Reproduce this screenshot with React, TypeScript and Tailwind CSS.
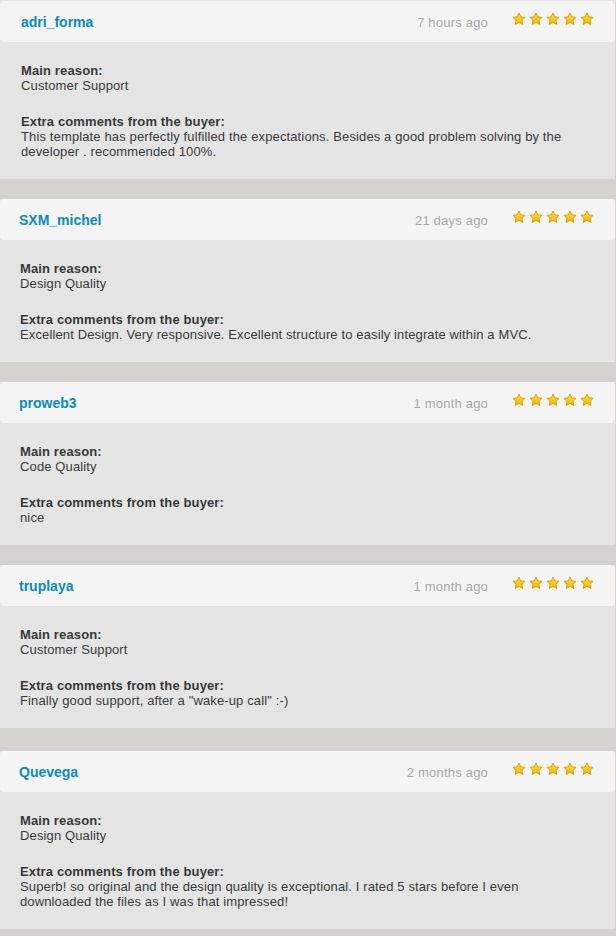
import React from "react";

type Review = {
  user: string;
  date: string;
  reason: string;
  comment: string;
  first?: boolean;
  gap: string;
};

const reviews: Review[] = [
  {
    user: "adri_forma",
    date: "7 hours ago",
    reason: "Customer Support",
    comment:
      "This template has perfectly fulfilled the expectations. Besides a good problem solving by the developer . recommended 100%.",
    first: true,
    gap: "mb-[20px]",
  },
  {
    user: "SXM_michel",
    date: "21 days ago",
    reason: "Design Quality",
    comment: "Excellent Design. Very responsive. Excellent structure to easily integrate within a MVC.",
    gap: "mb-[20px]",
  },
  {
    user: "proweb3",
    date: "1 month ago",
    reason: "Code Quality",
    comment: "nice",
    gap: "mb-[20px]",
  },
  {
    user: "truplaya",
    date: "1 month ago",
    reason: "Customer Support",
    comment: 'Finally good support, after a "wake-up call" :-)',
    gap: "mb-[23px]",
  },
  {
    user: "Quevega",
    date: "2 months ago",
    reason: "Design Quality",
    comment:
      "Superb! so original and the design quality is exceptional. I rated 5 stars before I even downloaded the files as I was that impressed!",
    gap: "mb-[20px]",
  },
];

function Star() {
  return (
    <svg width="14" height="14" viewBox="0 0 24 23" className="block">
      <defs>
        <linearGradient id="sg" x1="0" y1="0" x2="0" y2="1">
          <stop offset="0" stopColor="#ffe04a" />
          <stop offset="1" stopColor="#f6b400" />
        </linearGradient>
      </defs>
      <path
        d="M12 1.2 L15.1 7.9 L22.4 8.7 L17 13.6 L18.5 20.9 L12 17.2 L5.5 20.9 L7 13.6 L1.6 8.7 L8.9 7.9 Z"
        fill="url(#sg)"
        stroke="#d99a00"
        strokeWidth="1.6"
        strokeLinejoin="round"
      />
    </svg>
  );
}

function Card({ r }: { r: Review }) {
  return (
    <div className={`bg-[#e4e4e4] mr-px ${r.first ? "pt-px" : ""} ${r.gap}`}>
      <div className={`h-[41px] bg-[#f4f4f4] rounded-[4px] flex items-center pr-[21px] ${r.first ? "pl-[21px]" : "pl-[19px]"}`}>
        <span className="text-[14px] font-bold text-[#0e89bf] leading-none">{r.user}</span>
        <span className="flex-1" />
        <span className="text-[13px] tracking-[0.2px] text-[#a8a8a8] leading-none mt-[1px]">{r.date}</span>
        <div className="flex gap-[3px] mb-[6px] ml-[24px]">
          <Star />
          <Star />
          <Star />
          <Star />
          <Star />
        </div>
      </div>
      <div className={`pt-[21px] pb-[20px] pr-[40px] text-[13px] leading-[15px] tracking-[0.13px] text-[#3a3a3a] ${r.first ? "pl-[21px]" : "pl-[20px]"}`}>
        <div className="font-bold text-[#383838]">Main reason:</div>
        <div>{r.reason}</div>
        <div className="font-bold text-[#383838] mt-[21px]">Extra comments from the buyer:</div>
        <div>{r.comment}</div>
      </div>
    </div>
  );
}

export default function App() {
  return (
    <div
      className="w-[616px] min-h-[936px] bg-[#d3d2cf]"
      style={{ fontFamily: '"Liberation Sans", Arial, sans-serif' }}
    >
      {reviews.map((r) => (
        <Card key={r.user} r={r} />
      ))}
    </div>
  );
}
